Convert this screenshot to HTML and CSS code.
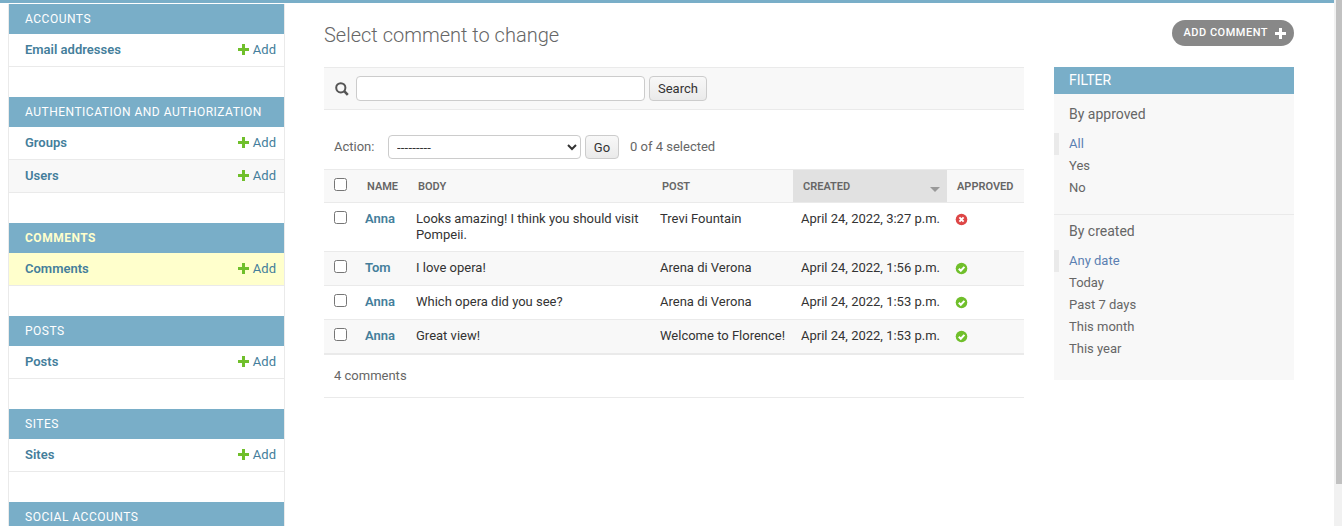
FILE: index.html
```html
<!DOCTYPE html>
<html lang="en">
<head>
    <meta charset="UTF-8">
    <meta name="viewport" content="width=device-width, initial-scale=1.0">
    <title>Select comment to change</title>
    <link rel="stylesheet" href="styles.css">
</head>
<body>
    <div class="page">
        <div class="topbar"></div>
        <div class="main">
            <nav class="sidebar">
                <div class="module">
                    <h2 class="caption">Accounts</h2>
                    <div class="nav-row"><a class="model" href="#">Email addresses</a><a class="add" href="#"><svg class="plus" viewBox="0 0 11 11"><path d="M4 0h3v4h4v3H7v4H4V7H0V4h4z"/></svg>Add</a></div>
                </div>
                <div class="module">
                    <h2 class="caption">Authentication and Authorization</h2>
                    <div class="nav-row"><a class="model" href="#">Groups</a><a class="add" href="#"><svg class="plus" viewBox="0 0 11 11"><path d="M4 0h3v4h4v3H7v4H4V7H0V4h4z"/></svg>Add</a></div>
                    <div class="nav-row alt"><a class="model" href="#">Users</a><a class="add" href="#"><svg class="plus" viewBox="0 0 11 11"><path d="M4 0h3v4h4v3H7v4H4V7H0V4h4z"/></svg>Add</a></div>
                </div>
                <div class="module">
                    <h2 class="caption current-app">Comments</h2>
                    <div class="nav-row current"><a class="model" href="#">Comments</a><a class="add" href="#"><svg class="plus" viewBox="0 0 11 11"><path d="M4 0h3v4h4v3H7v4H4V7H0V4h4z"/></svg>Add</a></div>
                </div>
                <div class="module">
                    <h2 class="caption">Posts</h2>
                    <div class="nav-row"><a class="model" href="#">Posts</a><a class="add" href="#"><svg class="plus" viewBox="0 0 11 11"><path d="M4 0h3v4h4v3H7v4H4V7H0V4h4z"/></svg>Add</a></div>
                </div>
                <div class="module">
                    <h2 class="caption">Sites</h2>
                    <div class="nav-row"><a class="model" href="#">Sites</a><a class="add" href="#"><svg class="plus" viewBox="0 0 11 11"><path d="M4 0h3v4h4v3H7v4H4V7H0V4h4z"/></svg>Add</a></div>
                </div>
                <div class="module">
                    <h2 class="caption">Social Accounts</h2>
                </div>
            </nav>

            <div class="content">
                <div class="title-row">
                    <h1>Select comment to change</h1>
                    <a class="add-button" href="#">Add comment<svg class="plus-white" viewBox="0 0 11 11"><path d="M4 0h3v4h4v3H7v4H4V7H0V4h4z"/></svg></a>
                </div>

                <div class="changelist">
                    <div class="results">
                        <form class="toolbar">
                            <svg class="search-icon" viewBox="0 0 14 14"><circle cx="5.8" cy="5.8" r="4.6"/><path d="M9.2 9.2l3.6 3.6"/></svg>
                            <input class="search-input" type="text">
                            <button class="btn search-btn" type="button">Search</button>
                        </form>

                        <div class="actions">
                            <label class="action-label" for="action">Action:</label>
                            <select class="action-select" id="action"><option>---------</option></select>
                            <button class="btn go-btn" type="button">Go</button>
                            <span class="counter">0 of 4 selected</span>
                        </div>

                        <table class="result-table">
                            <colgroup>
                                <col class="c-check"><col class="c-name"><col class="c-body"><col class="c-post"><col class="c-created"><col class="c-approved">
                            </colgroup>
                            <thead>
                                <tr>
                                    <th class="check-cell"><input type="checkbox"></th>
                                    <th>Name</th>
                                    <th>Body</th>
                                    <th>Post</th>
                                    <th class="sorted">Created<span class="sort-arrow"></span></th>
                                    <th>Approved</th>
                                </tr>
                            </thead>
                            <tbody>
                                <tr>
                                    <td class="check-cell"><input type="checkbox"></td>
                                    <td><a class="name" href="#">Anna</a></td>
                                    <td>Looks amazing! I think you should visit Pompeii.</td>
                                    <td class="nowrap">Trevi Fountain</td>
                                    <td class="nowrap">April 24, 2022, 3:27 p.m.</td>
                                    <td><svg class="status" viewBox="0 0 13 13"><circle cx="6.5" cy="6.5" r="5.8" fill="#dd4646"/><path d="M4.4 4.4l4.2 4.2M8.6 4.4l-4.2 4.2" stroke="#fff" stroke-width="2" fill="none"/></svg></td>
                                </tr>
                                <tr class="alt">
                                    <td class="check-cell"><input type="checkbox"></td>
                                    <td><a class="name" href="#">Tom</a></td>
                                    <td>I love opera!</td>
                                    <td class="nowrap">Arena di Verona</td>
                                    <td class="nowrap">April 24, 2022, 1:56 p.m.</td>
                                    <td><svg class="status" viewBox="0 0 13 13"><circle cx="6.5" cy="6.5" r="5.8" fill="#70bf2b"/><path d="M3.8 6.7l2 2 3.6-3.8" stroke="#fff" stroke-width="2" fill="none"/></svg></td>
                                </tr>
                                <tr>
                                    <td class="check-cell"><input type="checkbox"></td>
                                    <td><a class="name" href="#">Anna</a></td>
                                    <td>Which opera did you see?</td>
                                    <td class="nowrap">Arena di Verona</td>
                                    <td class="nowrap">April 24, 2022, 1:53 p.m.</td>
                                    <td><svg class="status" viewBox="0 0 13 13"><circle cx="6.5" cy="6.5" r="5.8" fill="#70bf2b"/><path d="M3.8 6.7l2 2 3.6-3.8" stroke="#fff" stroke-width="2" fill="none"/></svg></td>
                                </tr>
                                <tr class="alt">
                                    <td class="check-cell"><input type="checkbox"></td>
                                    <td><a class="name" href="#">Anna</a></td>
                                    <td>Great view!</td>
                                    <td class="nowrap">Welcome to Florence!</td>
                                    <td class="nowrap">April 24, 2022, 1:53 p.m.</td>
                                    <td><svg class="status" viewBox="0 0 13 13"><circle cx="6.5" cy="6.5" r="5.8" fill="#70bf2b"/><path d="M3.8 6.7l2 2 3.6-3.8" stroke="#fff" stroke-width="2" fill="none"/></svg></td>
                                </tr>
                            </tbody>
                        </table>

                        <p class="paginator">4 comments</p>
                    </div>

                    <aside class="filter">
                        <h2>Filter</h2>
                        <div class="filter-group">
                            <h3>By approved</h3>
                            <ul>
                                <li class="selected"><a href="#">All</a></li>
                                <li><a href="#">Yes</a></li>
                                <li><a href="#">No</a></li>
                            </ul>
                        </div>
                        <div class="filter-group last">
                            <h3>By created</h3>
                            <ul>
                                <li class="selected"><a href="#">Any date</a></li>
                                <li><a href="#">Today</a></li>
                                <li><a href="#">Past 7 days</a></li>
                                <li><a href="#">This month</a></li>
                                <li><a href="#">This year</a></li>
                            </ul>
                        </div>
                    </aside>
                </div>
            </div>
        </div>
    </div>

    <div class="scrollbar"><div class="scrollbar-thumb"></div></div>
</body>
</html>
```

FILE: styles.css
```css
html, body {
    height: 100%;
    overflow: hidden;
}

body {
    margin: 0;
    padding: 0;
    font-family: Roboto, "Liberation Sans", sans-serif;
    font-size: 13px;
    color: #333;
    background: #fff;
}

a {
    text-decoration: none;
    color: #447e9b;
}

.page {
    width: 1334px;
    height: 526px;
    overflow: hidden;
}

.topbar {
    height: 3px;
    background: #79aec8;
}

.main {
    display: flex;
    align-items: flex-start;
}

/* sidebar */

.sidebar {
    width: 275px;
    margin: 1px 0 0 8px;
    border-left: 1px solid #eaeaea;
    border-right: 1px solid #eaeaea;
    flex-shrink: 0;
}

.module {
    margin-bottom: 30px;
}

.caption {
    margin: 0;
    height: 30px;
    padding-left: 16px;
    line-height: 30px;
    font-size: 12px;
    font-weight: 400;
    letter-spacing: 0.5px;
    text-transform: uppercase;
    color: #fff;
    background: #79aec8;
}

.caption.current-app {
    font-weight: 700;
    color: #ffc;
}

.nav-row {
    display: flex;
    justify-content: space-between;
    align-items: center;
    box-sizing: border-box;
    height: 33px;
    padding: 0 8px 2px 16px;
    border-bottom: 1px solid #eaeaea;
    background: #fff;
}

.nav-row.alt {
    background: #f8f8f8;
}

.nav-row.current {
    background: #ffc;
}

.model {
    font-weight: 600;
}

.add {
    display: flex;
    align-items: center;
}

.plus {
    width: 11px;
    height: 11px;
    margin-right: 4px;
    fill: #70bf2b;
}

/* content */

.content {
    width: 970px;
    margin-left: 39px;
    flex-shrink: 0;
}

.title-row {
    display: flex;
    justify-content: space-between;
    align-items: flex-start;
    height: 64px;
}

h1 {
    margin: 20px 0 0;
    font-size: 20px;
    line-height: 24px;
    font-weight: 300;
    color: #666;
}

.add-button {
    display: flex;
    align-items: center;
    height: 26px;
    margin-top: 17px;
    padding: 0 8px 2px 12px;
    box-sizing: border-box;
    border-radius: 15px;
    background: #888;
    color: #fff;
    font-size: 11px;
    font-weight: 500;
    letter-spacing: 0.5px;
    text-transform: uppercase;
}

.plus-white {
    width: 11px;
    height: 11px;
    margin: 2px 0 0 7px;
    fill: #fff;
}

.changelist {
    display: flex;
    justify-content: space-between;
    align-items: flex-start;
}

.results {
    width: 700px;
}

.toolbar {
    display: flex;
    align-items: center;
    height: 41px;
    padding-left: 11px;
    border-top: 1px solid #eaeaea;
    border-bottom: 1px solid #eaeaea;
    background: #f8f8f8;
}

.search-icon {
    width: 14px;
    height: 14px;
    margin-right: 7px;
    fill: none;
    stroke: #555;
    stroke-width: 2;
}

.search-icon path {
    stroke-width: 2.6;
}

.search-input {
    width: 289px;
    height: 25px;
    box-sizing: border-box;
    padding: 2px 5px;
    border: 1px solid #ccc;
    border-radius: 4px;
    background: #fff;
    font: inherit;
}

.btn {
    box-sizing: border-box;
    height: 25px;
    padding: 0 9px;
    border: 1px solid #ccc;
    border-radius: 4px;
    background: linear-gradient(#f8f8f8, #eaeaea);
    color: #333;
    font-family: inherit;
    font-size: 13px;
}

.search-btn {
    width: 58px;
    margin-left: 4px;
    padding: 0 10px 0 8px;
}

.actions {
    display: flex;
    align-items: center;
    height: 24px;
    margin-top: 25px;
    padding-left: 10px;
    color: #666;
}

.action-label {
    width: 54px;
    padding-bottom: 2px;
}

.action-select {
    width: 193px;
    height: 24px;
    padding: 0 4px;
    border: 1px solid #ccc;
    border-radius: 4px;
    background: #fff;
    color: #333;
    font-family: inherit;
    font-size: 13px;
    letter-spacing: 0.2px;
}

.go-btn {
    width: 34px;
    height: 24px;
    margin-left: 4px;
    padding: 0;
}

.counter {
    margin-left: 11px;
    padding-bottom: 2px;
}

.result-table {
    width: 700px;
    margin-top: 10px;
    table-layout: fixed;
    border-collapse: separate;
    border-spacing: 0;
    border-top: 1px solid #eaeaea;
    border-bottom: 2px solid #eaeaea;
}

.c-check { width: 33px; }
.c-name { width: 51px; }
.c-body { width: 244px; }
.c-post { width: 141px; }
.c-created { width: 154px; }
.c-approved { width: 77px; }

th {
    position: relative;
    height: 32px;
    padding: 0 0 0 10px;
    border-bottom: 1px solid #eaeaea;
    background: #f8f8f8;
    text-align: left;
    font-size: 11px;
    font-weight: 600;
    color: #666;
    text-transform: uppercase;
}

th.sorted {
    background: #e1e1e1;
}

.sort-arrow {
    position: absolute;
    right: 7px;
    top: 17px;
    border-left: 5px solid transparent;
    border-right: 5px solid transparent;
    border-top: 5px solid #999;
}

td {
    height: 17px;
    padding: 8px;
    border-bottom: 1px solid #eaeaea;
    line-height: 16px;
    vertical-align: top;
}

td.nowrap {
    white-space: nowrap;
}

tbody tr:last-child td {
    border-bottom: 0;
}

tr.alt td {
    background: #f8f8f8;
}

td.check-cell {
    padding: 8px 0 0 10px;
}

th.check-cell {
    height: 24px;
    padding: 8px 0 0 10px;
    vertical-align: top;
}

.check-cell input {
    display: block;
    width: 13px;
    height: 13px;
    margin: 0;
}

.name {
    font-weight: 600;
}

.status {
    display: block;
    width: 13px;
    height: 13px;
    margin: 2px 0 1px;
}

.paginator {
    margin: 0;
    height: 42px;
    padding-left: 10px;
    line-height: 41px;
    color: #666;
    border-bottom: 1px solid #eaeaea;
}

/* filter */

.filter {
    width: 240px;
    height: 313px;
    background: #f8f8f8;
    color: #666;
}

.filter h2 {
    margin: 0;
    height: 27px;
    padding-left: 15px;
    line-height: 27px;
    font-size: 14px;
    font-weight: 400;
    text-transform: uppercase;
    color: #fff;
    background: #79aec8;
}

.filter-group {
    border-bottom: 1px solid #eaeaea;
    box-sizing: border-box;
    padding-top: 11px;
    height: 121px;
}

.filter-group.last {
    border-bottom: 0;
    height: auto;
    padding-top: 7px;
}

.filter h3 {
    margin: 0 0 10px;
    padding-left: 15px;
    line-height: 18px;
    font-size: 14px;
    font-weight: 400;
    color: #666;
}

.filter ul {
    margin: 0;
    padding: 0;
    list-style: none;
}

.filter li {
    height: 22px;
    padding-left: 15px;
    line-height: 22px;
}

.filter li a {
    color: #666;
}

.filter li.selected {
    padding-left: 10px;
    border-left: 5px solid #eaeaea;
}

.filter li.selected a {
    color: #5b80b2;
}

/* page scrollbar */

.scrollbar {
    position: fixed;
    top: 0;
    right: 0;
    bottom: 0;
    width: 8px;
    background: #f1f1f1;
}

.scrollbar-thumb {
    height: 484px;
    margin-left: 2px;
    background: #c1c1c1;
}
```
